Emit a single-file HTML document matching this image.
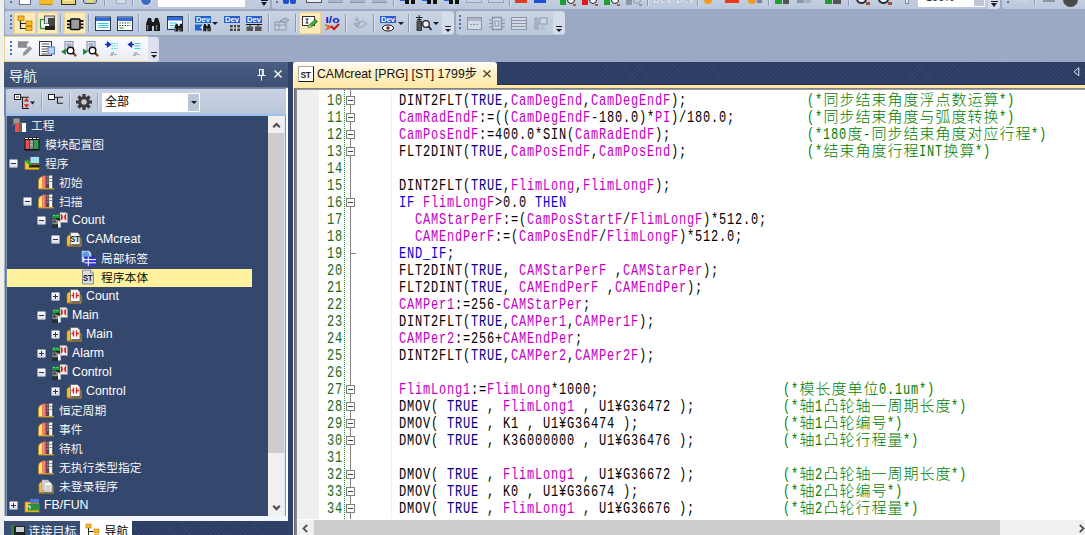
<!DOCTYPE html>
<html lang="zh-CN"><head><meta charset="utf-8"><title>GX Works3</title>
<style>
*{box-sizing:border-box;margin:0;padding:0}
html,body{width:1085px;height:535px;overflow:hidden}
body{position:relative;background:#9CA9C5;font-family:"Liberation Sans","Noto Sans CJK SC",sans-serif;font-size:12px;color:#000}
.a{position:absolute}
svg{position:absolute;overflow:visible}
.tb{position:absolute;background:linear-gradient(#C9D3E4,#BBC7DB);}
.sep{position:absolute;width:1px;background:#8D99B3;box-shadow:1px 0 0 #DCE3EF}
.hl{position:absolute;background:#FDEBB9;border:1px solid #F0D48C}
.grip{position:absolute;width:2px}
.grip i{position:absolute;left:0;width:2px;height:2px;background:#5A6C94}
.tree{position:absolute;left:7px;top:116px;width:261px;height:400px;background:#34476C;color:#fff;font-size:12px;font-weight:350;overflow:hidden}
.row{position:absolute;left:0;height:19px;line-height:19px;white-space:nowrap}
.row span{position:absolute;top:0}
.ex{position:absolute;width:9px;height:9px;background:linear-gradient(#fff,#D8DCE4);border:1px solid #98A0B4;border-radius:1px}
.ex b{position:absolute;left:1px;top:3px;width:5px;height:1px;background:#2B2B6B}
.ex u{position:absolute;left:3px;top:1px;width:1px;height:5px;background:#2B2B6B}
.code{position:absolute;left:0;top:0;font-family:"Liberation Mono","Noto Sans CJK SC",monospace}
.ln{position:absolute;left:0;height:17px;width:800px;white-space:pre}
.s{position:absolute;top:2px;height:17px;line-height:17px;font-size:12px;letter-spacing:.8px;transform:scaleY(1.3333);transform-origin:0 12px;white-space:pre;font-family:"Liberation Mono","Noto Sans CJK SC",monospace}
.m{position:absolute;top:2px;height:17px;line-height:17px;font-size:16px;white-space:pre;color:#008000;font-family:"Liberation Mono","Noto Sans CJK SC",monospace}
.m i{display:inline-block;font-style:normal;font-size:12px;letter-spacing:.8px;line-height:17px;height:17px;vertical-align:top;transform:scaleY(1.3333);transform-origin:0 12px}
.m b{display:inline-block;position:relative;top:-1px;font-weight:300;font-size:15px;width:16px;height:17px;vertical-align:top;line-height:17px;text-align:center}
.k{color:#0000CC}.t{color:#000080}.v{color:#C000C0}
.fb{position:absolute;left:346px;width:9px;height:9px;border:1px solid #808080;background:#fff}
.fb:after{content:"";position:absolute;left:1px;top:3px;width:5px;height:1px;background:#404040}
</style></head>
<body>
<div class="a" style="left:0;top:0;width:4px;height:535px;background:#EFEFEE"></div>
<div class="tb" style="left:5px;top:-6px;width:265px;height:15px;border-radius:3px"></div>
<div class="tb" style="left:272px;top:-6px;width:728px;height:15px;border-radius:3px"></div>
<div class="tb" style="left:1002px;top:-6px;width:90px;height:15px;border-radius:3px"></div>
<div class="a" style="left:988px;top:-6px;width:12px;height:15px;background:#D3DAE8;border-radius:0 0 3px 0"></div>
<div class="a" style="left:10px;top:1px;width:2px;height:2px;background:#5A6C94;"></div>
<div class="a" style="left:19px;top:-2px;width:12px;height:7px;background:#fff;border:1px solid #6A7488"></div>
<div class="a" style="left:39px;top:-2px;width:14px;height:7px;background:#F5B92E;border-radius:0 0 2px 2px;border-bottom:1px solid #B8860B"></div>
<div class="a" style="left:61px;top:-2px;width:15px;height:7px;background:#E8D27A;border:1px solid #333;border-top:0"></div>
<div class="a" style="left:64px;top:-2px;width:9px;height:3px;background:#F5E9A8;"></div>
<div class="a" style="left:83px;top:-2px;width:14px;height:6px;background:#C8C8C0;border:1px solid #555;border-radius:0 0 3px 3px"></div>
<div class="a" style="left:87px;top:-1px;width:6px;height:3px;background:#E2E26A;"></div>
<div class="sep" style="left:104px;top:0;height:6px"></div>
<div class="a" style="left:116px;top:-2px;width:10px;height:6px;background:#D6DCE8;border:1px solid #A8B0C0"></div>
<div class="sep" style="left:132px;top:0;height:6px"></div>
<div class="a" style="left:140px;top:-6px;width:12px;height:12px;background:#3C68C8;border-radius:6px;border:1px solid #E8EEFA"></div>
<div class="a" style="left:158px;top:-4px;width:87px;height:11px;background:#fff;"></div>
<div class="a" style="left:245px;top:-4px;width:11px;height:11px;background:#C2CADB;"></div>
<div class="a" style="left:261px;top:0;width:7px;height:1px;background:#1A1A2A"></div>
<div class="a" style="left:261px;top:2px;width:0;height:0;border:3.5px solid transparent;border-top:4px solid #1A1A2A"></div>
<div class="a" style="left:276px;top:1px;width:2px;height:2px;background:#5A6C94;"></div>
<div class="a" style="left:283px;top:-2px;width:6px;height:6px;background:#1F4FD0;border-radius:0 0 2px 2px"></div>
<div class="a" style="left:290px;top:-2px;width:6px;height:6px;background:#1F4FD0;border-radius:0 0 2px 2px"></div>
<div class="a" style="left:306px;top:-2px;width:16px;height:5px;background:#E8ECF4;border:1px solid #555;border-top:0"></div>
<div class="a" style="left:328px;top:-2px;width:15px;height:5px;background:#AEB6C6;border-bottom:1px solid #8C94A6"></div>
<div class="a" style="left:350px;top:-2px;width:15px;height:5px;background:#AEB6C6;border-bottom:1px solid #8C94A6"></div>
<div class="a" style="left:372px;top:-2px;width:15px;height:5px;background:#AEB6C6;border-bottom:1px solid #8C94A6"></div>
<div class="sep" style="left:393px;top:0;height:6px"></div>
<div class="a" style="left:400px;top:-2px;width:6px;height:3px;background:#1F5FD8;"></div>
<div class="a" style="left:405px;top:-2px;width:4px;height:6px;background:#111;"></div>
<div class="a" style="left:411px;top:-2px;width:4px;height:6px;background:#111;"></div>
<div class="a" style="left:422px;top:-2px;width:6px;height:3px;background:#1F5FD8;"></div>
<div class="a" style="left:427px;top:-2px;width:4px;height:6px;background:#111;"></div>
<div class="a" style="left:433px;top:-2px;width:4px;height:6px;background:#111;"></div>
<div class="a" style="left:444px;top:-2px;width:6px;height:3px;background:#1F5FD8;"></div>
<div class="a" style="left:449px;top:-2px;width:4px;height:6px;background:#111;"></div>
<div class="a" style="left:455px;top:-2px;width:4px;height:6px;background:#111;"></div>
<div class="a" style="left:466px;top:-2px;width:16px;height:5px;background:#C9D0DE;border:1px solid #9AA3B6;border-top:0"></div>
<div class="a" style="left:488px;top:-2px;width:16px;height:5px;background:#C9D0DE;border:1px solid #9AA3B6;border-top:0"></div>
<div class="sep" style="left:509px;top:0;height:6px"></div>
<div class="a" style="left:515px;top:-1px;width:12px;height:4px;background:#E23A1E;"></div>
<div class="a" style="left:534px;top:-1px;width:12px;height:4px;background:#1F4FD0;"></div>
<div class="a" style="left:560px;top:-2px;width:6px;height:7px;background:#1E9E2E;"></div>
<div class="a" style="left:567px;top:-4px;width:8px;height:8px;background:#F4F4F4;border:1.5px solid #222;border-radius:5px"></div>
<div class="a" style="left:573px;top:4px;width:3px;height:2px;background:#B06030;"></div>
<div class="a" style="left:582px;top:-2px;width:6px;height:7px;background:#E01818;"></div>
<div class="a" style="left:589px;top:-4px;width:8px;height:8px;background:#F4F4F4;border:1.5px solid #222;border-radius:5px"></div>
<div class="a" style="left:595px;top:4px;width:3px;height:2px;background:#B06030;"></div>
<div class="a" style="left:604px;top:-2px;width:6px;height:7px;background:#1E9E2E;"></div>
<div class="a" style="left:611px;top:-4px;width:8px;height:8px;background:#F4F4F4;border:1.5px solid #222;border-radius:5px"></div>
<div class="a" style="left:617px;top:4px;width:3px;height:2px;background:#B06030;"></div>
<div class="a" style="left:626px;top:-2px;width:6px;height:7px;background:#8E96A6;"></div>
<div class="a" style="left:633px;top:-4px;width:8px;height:8px;background:#C4CAD6;border:1.5px solid #8E96A6;border-radius:5px"></div>
<div class="a" style="left:639px;top:4px;width:3px;height:2px;background:#8E96A6;"></div>
<div class="sep" style="left:647px;top:0;height:6px"></div>
<div class="a" style="left:653px;top:-6px;font:bold 10px 'Liberation Sans','Noto Sans CJK SC',sans-serif;color:#E6EAF2;text-shadow:0 0 1px #7C869C;letter-spacing:0">Dev</div>
<div class="a" style="left:676px;top:-6px;font:bold 10px 'Liberation Sans','Noto Sans CJK SC',sans-serif;color:#E6EAF2;text-shadow:0 0 1px #7C869C;letter-spacing:0">Dev</div>
<div class="sep" style="left:697px;top:0;height:6px"></div>
<div class="a" style="left:704px;top:-2px;width:8px;height:6px;background:#F59A1E;border-radius:0 0 4px 4px"></div>
<div class="a" style="left:725px;top:-2px;width:14px;height:5px;background:#E83A1A;"></div>
<div class="a" style="left:748px;top:-2px;width:8px;height:6px;background:#F59A1E;border-radius:0 0 4px 4px"></div>
<div class="a" style="left:757px;top:-1px;width:5px;height:4px;background:#7C8496;"></div>
<div class="sep" style="left:768px;top:0;height:6px"></div>
<div class="a" style="left:775px;top:-2px;width:7px;height:6px;background:#1E9E2E;"></div>
<div class="a" style="left:783px;top:-1px;width:6px;height:5px;background:#555;"></div>
<div class="a" style="left:797px;top:-1px;width:7px;height:4px;background:#8E96A6;"></div>
<div class="a" style="left:805px;top:-1px;width:6px;height:4px;background:#A8AEBC;"></div>
<div class="a" style="left:825px;top:-2px;width:7px;height:6px;background:#1E9E2E;"></div>
<div class="a" style="left:833px;top:-1px;width:8px;height:5px;background:#555;"></div>
<div class="sep" style="left:848px;top:0;height:6px"></div>
<div class="a" style="left:856px;top:-6px;width:11px;height:10px;background:#EEF2F8;border:2px solid #2A2A3A;border-radius:6px"></div>
<div class="a" style="left:866px;top:2px;width:4px;height:3px;background:#A05030;"></div>
<div class="a" style="left:878px;top:-6px;width:11px;height:10px;background:#EEF2F8;border:2px solid #2A2A3A;border-radius:6px"></div>
<div class="a" style="left:888px;top:2px;width:4px;height:3px;background:#A05030;"></div>
<div class="a" style="left:905px;top:-1px;width:4px;height:5px;background:#E8ECF4;border:1px solid #7C8496"></div>
<div class="a" style="left:918px;top:-4px;width:67px;height:10.5px;background:#fff;"></div>
<div class="a" style="left:926px;top:-8px;font:11px/11px 'Liberation Sans','Noto Sans CJK SC',sans-serif;color:#222">100%</div>
<div class="a" style="left:974px;top:-4px;width:9.5px;height:9.5px;background:#BEC7D9;"></div>
<div class="a" style="left:991px;top:.5px;width:7px;height:1.500px;background:#1A1A2A"></div>
<div class="a" style="left:991px;top:3px;width:0;height:0;border:3.5px solid transparent;border-top:4px solid #1A1A2A"></div>
<div class="a" style="left:1007px;top:1px;width:2px;height:2px;background:#5A6C94;"></div>
<div class="a" style="left:1018px;top:-2px;width:10px;height:4px;background:#D0D4DC;"></div>
<div class="sep" style="left:1034px;top:0;height:6px"></div>
<div class="a" style="left:1043px;top:-2px;width:12px;height:4px;background:#8E94A0;"></div>
<div class="a" style="left:1063px;top:-8px;width:15px;height:15px;background:#4A4A4A;border-radius:8px"></div>
<div class="tb" style="left:5px;top:11px;width:449px;height:24px;border-radius:3px"></div>
<div class="a" style="left:442px;top:12px;width:12px;height:22px;background:#D6DDEA;border-radius:0 3px 3px 0"></div>
<div class="tb" style="left:456px;top:11px;width:109px;height:24px;border-radius:3px"></div>
<div class="a" style="left:553px;top:12px;width:12px;height:22px;background:#D6DDEA;border-radius:0 3px 3px 0"></div>
<div class="grip" style="left:10px;top:15px"><i style="top:0px"></i><i style="top:4px"></i><i style="top:8px"></i><i style="top:12px"></i></div>
<div class="grip" style="left:459px;top:15px"><i style="top:0px"></i><i style="top:4px"></i><i style="top:8px"></i><i style="top:12px"></i></div>
<div class="hl" style="left:14px;top:12px;width:21.500px;height:22px"></div>
<div class="hl" style="left:36.5px;top:12px;width:21.500px;height:22px"></div>
<div class="hl" style="left:64px;top:12px;width:21.500px;height:22px"></div>
<div class="hl" style="left:299px;top:12px;width:21.500px;height:22px"></div>
<div class="sep" style="left:60px;top:14px;height:18px"></div>
<div class="sep" style="left:88px;top:14px;height:18px"></div>
<div class="sep" style="left:138px;top:14px;height:18px"></div>
<div class="sep" style="left:188px;top:14px;height:18px"></div>
<div class="sep" style="left:268px;top:14px;height:18px"></div>
<div class="sep" style="left:295px;top:14px;height:18px"></div>
<div class="sep" style="left:345px;top:14px;height:18px"></div>
<div class="sep" style="left:373px;top:14px;height:18px"></div>
<div class="sep" style="left:408px;top:14px;height:18px"></div>
<svg style="left:17px;top:15px" width="16" height="16" viewBox="0 0 16 16">
<path d="M3.5 5v8.5h6M3.5 8.5h6" fill="none" stroke="#222" stroke-width="1.2"/>
<rect x="1" y="1" width="6" height="4.5" fill="#F5B92E" stroke="#B87A00" stroke-width=".8"/>
<rect x="9" y="6" width="6" height="4.5" fill="#F5B92E" stroke="#B87A00" stroke-width=".8"/>
<rect x="9" y="11.5" width="6" height="4" fill="#F5B92E" stroke="#B87A00" stroke-width=".8"/></svg>
<svg style="left:40px;top:15px" width="16" height="16" viewBox="0 0 16 16">
<rect x=".5" y="4.500" width="10" height="9" fill="#E8F4E8" stroke="#2E8B3A" stroke-width="1.2"/>
<rect x="4.500" y="1" width="10" height="8" fill="#D8DCE4" stroke="#555" stroke-width="1"/>
<rect x="8" y="3" width="7" height="9" fill="#444"/>
<rect x="5" y="11" width="10" height="4" fill="#222"/>
<rect x="3" y="9" width="6" height="2" fill="#fff"/></svg>
<svg style="left:67px;top:15px" width="16" height="16" viewBox="0 0 16 16">
<rect x="3.500" y="4" width="9.500" height="10.500" rx="1" fill="#9C9C9C" stroke="#111" stroke-width="1.6"/>
<path d="M0 6h3M0 9.300h3M0 12.600h3M13.500 6h3M13.500 9.300h3M13.500 12.600h3" stroke="#111" stroke-width="1.8"/></svg>
<svg style="left:95px;top:15.5px" width="16" height="16" viewBox="0 0 16 16"><rect x=".5" y="1" width="15" height="13.500" fill="#fff" stroke="#2A3A5A" stroke-width="1"/><rect x="1" y="1.500" width="14" height="3.500" fill="#2F6BD8"/><path d="M2.500 7.500h11M2.500 9.500h11M2.500 11.500h11" stroke="#38C8D8" stroke-width="1.100"/></svg>
<svg style="left:117px;top:15.5px" width="16" height="16" viewBox="0 0 16 16"><rect x=".5" y="1" width="15" height="13.500" fill="#fff" stroke="#2A3A5A" stroke-width="1"/><rect x="1" y="1.500" width="14" height="3.500" fill="#2F6BD8"/><path d="M2.500 7h11M2.500 9.500h11" stroke="#222" stroke-width="1.200" stroke-dasharray="1.300 1.300"/><path d="M2.500 12h4" stroke="#3AB83A" stroke-width="1.200"/></svg>
<svg style="left:145px;top:15.5px" width="16" height="16" viewBox="0 0 16 16"><g transform="translate(0 0) scale(1)"><path d="M1 15V8l2-6h3l1 4h2l1-4h3l2 6v7h-6v-5h-2v5z" fill="#1A1A1A"/><path d="M2.500 9v5M11.500 9v5" stroke="#777" stroke-width="1.500"/></g></svg>
<svg style="left:167px;top:15.5px" width="16" height="16" viewBox="0 0 16 16"><rect x=".5" y=".5" width="15" height="13" fill="#fff" stroke="#2A3A5A"/><rect x="1" y="1" width="14" height="3.500" fill="#2F6BD8"/><path d="M2.500 7h7M2.500 9.500h5M2.500 12h4" stroke="#38C8D8" stroke-width="1.100"/><g transform="translate(7 6.5) scale(0.6)"><path d="M1 15V8l2-6h3l1 4h2l1-4h3l2 6v7h-6v-5h-2v5z" fill="#1A1A1A"/><path d="M2.500 9v5M11.500 9v5" stroke="#777" stroke-width="1.500"/></g></svg>
<svg style="left:195px;top:15.5px" width="16" height="16" viewBox="0 0 16 16"><rect x="0" y="0" width="16" height="7" fill="#2060D0"/><text x="8" y="6.300" text-anchor="middle" font-size="7.500" font-weight="bold" fill="#fff" font-family="'Liberation Sans',sans-serif" textLength="14" lengthAdjust="spacingAndGlyphs">Dev</text><rect x="0" y="8.500" width="7" height="6" fill="#2060D0"/><path d="M5 11.500l3-2v4z" fill="#fff"/><g transform="translate(7.5 7) scale(0.55)"><path d="M1 15V8l2-6h3l1 4h2l1-4h3l2 6v7h-6v-5h-2v5z" fill="#1A1A1A"/><path d="M2.500 9v5M11.500 9v5" stroke="#777" stroke-width="1.500"/></g></svg>
<svg style="left:224px;top:15.5px" width="16" height="16" viewBox="0 0 16 16"><rect x="0" y="0" width="16" height="7" fill="#2060D0"/><text x="8" y="6.300" text-anchor="middle" font-size="7.500" font-weight="bold" fill="#fff" font-family="'Liberation Sans',sans-serif" textLength="14" lengthAdjust="spacingAndGlyphs">Dev</text><rect x="6" y="9" width="10" height="6" fill="#444"/><path d="M6 12h10M9.300 9v6M12.700 9v6" stroke="#E8E8E8" stroke-width="1"/></svg>
<svg style="left:246px;top:15.5px" width="16" height="16" viewBox="0 0 16 16"><rect x="0" y="0" width="16" height="7" fill="#2060D0"/><text x="8" y="6.300" text-anchor="middle" font-size="7.500" font-weight="bold" fill="#fff" font-family="'Liberation Sans',sans-serif" textLength="14" lengthAdjust="spacingAndGlyphs">Dev</text><path d="M0 8.500h16M4 8.500v2M12 8.500v2" stroke="#111" stroke-width="1"/><rect x=".5" y="10.500" width="6.500" height="4.500" fill="#555"/><rect x="9" y="10.500" width="6.500" height="4.500" fill="#555"/></svg>
<div class="a" style="left:211.5px;top:21.5px;width:0;height:0;border:3px solid transparent;border-top:3.500px solid #1A1A2A"></div>
<svg style="left:274px;top:16px" width="16" height="16" viewBox="0 0 16 16"><rect x="1" y="6" width="11" height="8" fill="#C8CFDC" stroke="#8F98AC"/><path d="M1 9h11M5 6v8" stroke="#8F98AC"/><path d="M6 5l5-3 4 2-4 3z" fill="#B4BCCC" stroke="#8F98AC"/></svg>
<svg style="left:302px;top:15px" width="16" height="16" viewBox="0 0 16 16"><rect x=".5" y="1.500" width="12" height="9" fill="#fff" stroke="#333"/><path d="M3.500 4h3M5 4v4M3.500 8h3" stroke="#222" stroke-width="1"/><path d="M6 13l1.500-3.500 6-5 2 2.300-6 5z" fill="#3AB03A" stroke="#1E6E1E" stroke-width=".8"/><path d="M6 13l1.500-3.500 1.800 2.300z" fill="#F0C060"/></svg>
<svg style="left:324px;top:15px" width="16" height="16" viewBox="0 0 16 16"><text x="8.500" y="7.500" text-anchor="middle" font-size="9" font-weight="bold" fill="#1020C0" font-family="'Liberation Sans',sans-serif" textLength="14" lengthAdjust="spacingAndGlyphs">I/o</text><path d="M1 10l4 1-2 3 4-2" fill="none" stroke="#F06010" stroke-width="1.600"/><path d="M7 11l3 3 5-5" fill="none" stroke="#D01010" stroke-width="2"/></svg>
<svg style="left:351px;top:15px" width="17" height="16" viewBox="0 0 17 16"><path d="M3 9l8-3 5 3-8 4z" fill="#C4CBD8" stroke="#99A2B5"/><path d="M4 9.500l2 2 3-4" fill="none" stroke="#9AA3B6" stroke-width="1.500"/><path d="M6 1v5M4 4l2 2 2-2" fill="none" stroke="#A8B0C2" stroke-width="1.200"/></svg>
<svg style="left:380px;top:15.5px" width="16" height="16" viewBox="0 0 16 16"><rect x="0" y="0" width="16" height="7" fill="#2060D0"/><text x="8" y="6.300" text-anchor="middle" font-size="7.500" font-weight="bold" fill="#fff" font-family="'Liberation Sans',sans-serif" textLength="14" lengthAdjust="spacingAndGlyphs">Dev</text><ellipse cx="8" cy="12" rx="5.500" ry="3" fill="#fff" stroke="#111" stroke-width="1"/><circle cx="8" cy="12" r="1.800" fill="#7A2A10"/></svg>
<div class="a" style="left:397.5px;top:21.5px;width:0;height:0;border:3px solid transparent;border-top:3.500px solid #1A1A2A"></div>
<svg style="left:415px;top:15px" width="18" height="16" viewBox="0 0 18 16"><rect x="2" y="6" width="4.500" height="9.500" fill="#555" stroke="#222" stroke-width=".8"/><path d="M4.200 0v6M1 2.500h6.500M2 4.500h4.500" stroke="#222" stroke-width="1"/><circle cx="11" cy="9" r="3.300" fill="#F4F8FF" stroke="#222" stroke-width="1.300"/><path d="M13.500 11.500l3 3.500" stroke="#222" stroke-width="1.800"/></svg>
<div class="a" style="left:432.5px;top:21.5px;width:0;height:0;border:3px solid transparent;border-top:3.500px solid #1A1A2A"></div>
<div class="a" style="left:445px;top:25.5px;width:6px;height:1.300px;background:#1A1A2A"></div><div class="a" style="left:445px;top:28.5px;width:0;height:0;border:3px solid transparent;border-top:3.300px solid #1A1A2A"></div>
<svg style="left:467px;top:16px" width="16" height="15" viewBox="0 0 16 15"><rect x=".5" y="1.500" width="14" height="12" fill="#D3D9E5" stroke="#8C95A8"/><rect x="1" y="2" width="13" height="3" fill="#AEB6C6"/><path d="M3 8.500h9" stroke="#8C95A8" stroke-dasharray="2 1"/></svg>
<svg style="left:489px;top:16px" width="16" height="15" viewBox="0 0 16 15"><rect x="3.500" y="1.500" width="9" height="12" fill="#D3D9E5" stroke="#8C95A8" stroke-width="1.500"/><path d="M0 4h3M0 7.500h3M0 11h3M13 4h3M13 7.500h3M13 11h3" stroke="#8C95A8" stroke-width="1.200"/><rect x="6" y="5" width="4" height="5" fill="none" stroke="#8C95A8"/></svg>
<svg style="left:511px;top:16px" width="16" height="15" viewBox="0 0 16 15"><rect x=".5" y="1.500" width="15" height="12" fill="#D3D9E5" stroke="#8C95A8"/><path d="M1 4.500h14M1 7.500h14M1 10.500h14" stroke="#8C95A8"/></svg>
<svg style="left:533px;top:16px" width="16" height="15" viewBox="0 0 16 15"><rect x="1" y="5" width="5" height="9" fill="#A8B0C2"/><rect x="7" y="2" width="7" height="6" fill="#D3D9E5" stroke="#8C95A8"/><path d="M3 1v4M1 3h5" stroke="#8C95A8"/><rect x="8" y="9" width="4" height="5" fill="#B8C0D0"/></svg>
<div class="a" style="left:556px;top:25.5px;width:6px;height:1.300px;background:#1A1A2A"></div><div class="a" style="left:556px;top:28.5px;width:0;height:0;border:3px solid transparent;border-top:3.300px solid #1A1A2A"></div>
<div class="a" style="left:4px;top:36px;width:144px;height:26px;background:linear-gradient(#FAFBFE,#E9EDF7);border:1px solid #EFD68A;border-right:0;border-radius:2px 0 0 0"></div>
<div class="a" style="left:147.5px;top:36.5px;width:11.5px;height:25px;background:#DBE1EE;border-radius:0 3px 3px 0"></div>
<div class="grip" style="left:10px;top:41px"><i style="top:0px"></i><i style="top:4px"></i><i style="top:8px"></i><i style="top:12px"></i></div>
<svg style="left:18px;top:41px" width="16" height="16" viewBox="0 0 16 16"><path d="M0 .3H11L8.500 4 10 6.800H0z" fill="#8C8C8C"/><path d="M11.500 5L14.200 7.700 7.800 14 4.800 14.800 5.200 11.800z" fill="#979797"/></svg>
<svg style="left:39px;top:41px" width="17" height="16" viewBox="0 0 17 16"><rect x=".5" y=".5" width="12" height="14" fill="#fff" stroke="#333"/><path d="M2.500 3h8M2.500 5.500h8M2.500 8h8M2.500 10.500h6M2.500 13h6" stroke="#555" stroke-width="1"/><rect x="9" y="6" width="6.500" height="7" fill="#BFD0F0" stroke="#5A7AC0"/></svg>
<svg style="left:61px;top:41px" width="16" height="16" viewBox="0 0 16 16"><rect x="4" y=".5" width="8" height="9" fill="#E8ECF6" stroke="#7C88A8"/><path d="M5.500 3h5M5.500 5h5" stroke="#6C7CA8"/><circle cx="9.500" cy="9.500" r="3.300" fill="#fff" stroke="#111" stroke-width="1.400"/><path d="M12 12l3 3" stroke="#111" stroke-width="2"/><path d="M13 13l2 2" stroke="#B05020" stroke-width="1.400"/><path d="M5 7.500v6.500l-5-3.200z" fill="#1E8E2E"/></svg>
<svg style="left:83px;top:41px" width="16" height="16" viewBox="0 0 16 16"><rect x="4" y=".5" width="8" height="9" fill="#E8ECF6" stroke="#7C88A8"/><path d="M5.500 3h5M5.500 5h5" stroke="#6C7CA8"/><circle cx="9.500" cy="9.500" r="3.300" fill="#fff" stroke="#111" stroke-width="1.400"/><path d="M12 12l3 3" stroke="#111" stroke-width="2"/><path d="M13 13l2 2" stroke="#B05020" stroke-width="1.400"/><path d="M0 7.500v6.500l5-3.200z" fill="#1E8E2E"/></svg>
<svg style="left:105px;top:41px" width="16" height="16" viewBox="0 0 16 16"><path d="M6.500 2.500h6M6.500 5h6M6.500 7.500h6" stroke="#48D0D8" stroke-width="1.200" stroke-dasharray="1.500 1"/><text x="5.500" y="15" font-size="5.500" font-style="italic" fill="#222" font-family="'Liberation Sans',sans-serif">//−</text><path d="M0 3.500h3.500M2.500 1.200l3 2.300-3 2.300z" fill="#1030C8" stroke="#1030C8" stroke-width="1.300"/></svg>
<svg style="left:128px;top:41px" width="16" height="16" viewBox="0 0 16 16"><path d="M6.500 2.500h6M6.500 5h6M6.500 7.500h6" stroke="#48D0D8" stroke-width="1.200" stroke-dasharray="6 0"/><text x="5.500" y="15" font-size="5.500" font-style="italic" fill="#222" font-family="'Liberation Sans',sans-serif">//−</text><path d="M6 3.500h-3.500M3.500 1.200l-3 2.300 3 2.300z" fill="#1030C8" stroke="#1030C8" stroke-width="1.300"/></svg>
<div class="a" style="left:150.5px;top:52px;width:6px;height:1.300px;background:#1A1A2A"></div><div class="a" style="left:150.5px;top:55px;width:0;height:0;border:3px solid transparent;border-top:3.300px solid #1A1A2A"></div>
<div class="a" style="left:4px;top:62px;width:284px;height:473px;background:#3A4D73"></div>
<div class="a" style="left:4px;top:62px;width:284px;height:26px;background:linear-gradient(#4A5D83,#3B4E74)"></div>
<div class="a" style="left:9px;top:63px;height:26px;line-height:27px;font-size:14px;color:#fff;font-weight:350">导航</div>
<svg style="left:257px;top:69px" width="9" height="12" viewBox="0 0 9 12"><path d="M2 .5h5M2.500 .5v6M6.300 .5v6M5.300 .5v6M.5 6.500h8M4.500 6.500v5" fill="none" stroke="#fff" stroke-width="1"/></svg>
<svg style="left:274px;top:70px" width="8" height="8" viewBox="0 0 8 8"><path d="M.5 .5l7 7M7.500 .5l-7 7" stroke="#fff" stroke-width="1.400"/></svg>
<div class="a" style="left:4px;top:87px;width:284px;height:1px;background:#6F7788"></div>
<div class="a" style="left:4px;top:88px;width:282px;height:28px;background:#7088B5"></div><div class="a" style="left:6px;top:88.500px;width:280px;height:26px;background:linear-gradient(#C9D2E2,#B9C5D9);border-radius:2px 0 0 0"></div>
<div class="a" style="left:6px;top:114px;width:280px;height:1.500px;background:#9CC0F2"></div>
<svg style="left:14px;top:94px" width="22" height="16" viewBox="0 0 22 16"><rect x=".5" y=".5" width="6" height="5" fill="#fff" stroke="#222"/><path d="M2 3h3" stroke="#222"/><path d="M7 3.200h8M8.500 3.200v11.300h6.500" fill="none" stroke="#222" stroke-width="1.100"/><path d="M12.500 3.800l2.600 3.700h-5.200zM12.500 14l2.600-3.700h-5.200z" fill="#E02010"/><path d="M16 7.500h5l-2.500 3z" fill="#1A1A2A"/></svg>
<div class="sep" style="left:41px;top:93px;height:17px;background:#98A3BA"></div>
<svg style="left:48px;top:94px" width="16" height="10" viewBox="0 0 16 10"><rect x=".5" y=".5" width="6" height="5" fill="#fff" stroke="#222"/><path d="M7 3.200h8M9.500 3.200v6h5.500" fill="none" stroke="#222" stroke-width="1.100"/></svg>
<div class="sep" style="left:69px;top:93px;height:17px;background:#98A3BA"></div>
<svg style="left:76px;top:94px" width="16" height="16" viewBox="0 0 16 16"><g transform="translate(8 8)"><circle r="4.300" fill="none" stroke="#3A3A3A" stroke-width="3"/><rect x="-1.600" y="-8" width="3.200" height="4" fill="#3A3A3A" transform="rotate(0)"/><rect x="-1.600" y="-8" width="3.200" height="4" fill="#3A3A3A" transform="rotate(45)"/><rect x="-1.600" y="-8" width="3.200" height="4" fill="#3A3A3A" transform="rotate(90)"/><rect x="-1.600" y="-8" width="3.200" height="4" fill="#3A3A3A" transform="rotate(135)"/><rect x="-1.600" y="-8" width="3.200" height="4" fill="#3A3A3A" transform="rotate(180)"/><rect x="-1.600" y="-8" width="3.200" height="4" fill="#3A3A3A" transform="rotate(225)"/><rect x="-1.600" y="-8" width="3.200" height="4" fill="#3A3A3A" transform="rotate(270)"/><rect x="-1.600" y="-8" width="3.200" height="4" fill="#3A3A3A" transform="rotate(315)"/></g></svg>
<div class="sep" style="left:97px;top:93px;height:17px;background:#98A3BA"></div>
<div class="a" style="left:102px;top:92.500px;width:98px;height:19px;background:#fff"></div>
<div class="a" style="left:188px;top:93.500px;width:11px;height:17px;background:#BCC5D6"></div>
<div class="a" style="left:105px;top:92px;height:20px;line-height:20px;font-size:12px">全部</div>
<div class="a" style="left:190.5px;top:101px;width:0;height:0;border:3px solid transparent;border-top:3.500px solid #1A1A2A"></div>
<div class="a" style="left:4px;top:116px;width:1px;height:400px;background:#B4B5BC"></div><div class="a" style="left:5px;top:116px;width:1px;height:400px;background:#687286"></div><div class="a" style="left:6px;top:116px;width:1px;height:400px;background:#7893B8"></div>
<div class="tree"><div class="row" style="top:0px;width:261px"><svg style="left:5px;top:1px" width="16" height="16" viewBox="0 0 16 16"><rect x="1" y="1" width="7" height="6" fill="#999" stroke="#444" stroke-width=".8"/><rect x="3" y="6" width="4" height="9" fill="#E85050"/><rect x="7" y="5" width="3" height="10" fill="#666"/><rect x="10" y="6" width="4" height="9" fill="#fff"/><path d="M0 8l2-1" stroke="#888"/></svg><span style="left:24px;top:1px;font-size:11.800px">工程</span></div><div class="row" style="top:19px;width:261px"><svg style="left:17px;top:1px" width="16" height="16" viewBox="0 0 16 16"><rect x=".5" y="1.500" width="15" height="13" fill="#111"/><rect x="1.500" y="4" width="4" height="9" fill="#E85050"/><rect x="6" y="4" width="3.500" height="9" fill="#888"/><rect x="10" y="4" width="4.500" height="9" fill="#2E9E4E"/><path d="M1 2.500h14" stroke="#fff" stroke-width="1.200" stroke-dasharray="3 1"/><path d="M6.500 6h2M6.500 9h2" stroke="#eee" stroke-width=".8"/></svg><span style="left:38px;top:1px;font-size:11.800px">模块配置图</span></div><div class="row" style="top:38px;width:261px"><div class="ex" style="left:2px;top:5px"><b></b></div><svg style="left:17px;top:1px" width="16" height="16" viewBox="0 0 16 16"><path d="M1 6h5l1 1.500h8v7h-14z" fill="#F5C030" stroke="#B8860B" stroke-width=".7"/><rect x="6" y="1.500" width="9.500" height="7" fill="#9EE0F0" stroke="#445" stroke-width=".8"/><rect x="5" y="9.500" width="10.500" height="3" fill="#222"/><path d="M2 5l5 5" stroke="#2E9E3E" stroke-width="2.500"/></svg><span style="left:38px;top:1px;font-size:11.800px">程序</span></div><div class="row" style="top:57px;width:261px"><svg style="left:31px;top:1px" width="16" height="16" viewBox="0 0 16 16"><path d="M.5 7q0-3 2.500-4l2-.5v12h-4.500z" fill="#FFE27A" stroke="#C08A18" stroke-width=".8"/><rect x="4.500" y="1.500" width="4" height="13" fill="#EE4B4B"/><rect x="5.300" y="2" width="1.200" height="12" fill="#F9A0A0"/><rect x="8.500" y=".5" width="2.700" height="14" fill="#4A4A4A"/><path d="M9 3h1.700M9 6h1.700M9 9h1.700" stroke="#C8C8C8" stroke-width=".8"/><rect x="11.200" y="1.500" width="3.300" height="13" fill="#F6F6F6"/><path d="M11.800 4.500h2M11.800 7.500h2" stroke="#555" stroke-width=".8"/><rect x="14.500" y="2.500" width="1.200" height="12" fill="#3A3A3A"/><path d="M.8 14.700h15" stroke="#D8A028" stroke-width="1.400"/></svg><span style="left:52px;top:1px;font-size:11.800px">初始</span></div><div class="row" style="top:76px;width:261px"><div class="ex" style="left:16px;top:5px"><b></b></div><svg style="left:31px;top:1px" width="16" height="16" viewBox="0 0 16 16"><path d="M.5 7q0-3 2.500-4l2-.5v12h-4.500z" fill="#FFE27A" stroke="#C08A18" stroke-width=".8"/><rect x="4.500" y="1.500" width="4" height="13" fill="#EE4B4B"/><rect x="5.300" y="2" width="1.200" height="12" fill="#F9A0A0"/><rect x="8.500" y=".5" width="2.700" height="14" fill="#4A4A4A"/><path d="M9 3h1.700M9 6h1.700M9 9h1.700" stroke="#C8C8C8" stroke-width=".8"/><rect x="11.200" y="1.500" width="3.300" height="13" fill="#F6F6F6"/><path d="M11.800 4.500h2M11.800 7.500h2" stroke="#555" stroke-width=".8"/><rect x="14.500" y="2.500" width="1.200" height="12" fill="#3A3A3A"/><path d="M.8 14.700h15" stroke="#D8A028" stroke-width="1.400"/></svg><span style="left:52px;top:1px;font-size:11.800px">扫描</span></div><div class="row" style="top:95px;width:261px"><div class="ex" style="left:30px;top:5px"><b></b></div><svg style="left:45px;top:1px" width="16" height="16" viewBox="0 0 16 16"><rect x=".5" y="2.500" width="6.500" height="3.500" fill="#18A038"/><path d="M1 3.500h2M4.500 3.500h1.500" stroke="#8EE09A" stroke-width=".8"/><rect x="4" y="6" width="4" height="2.500" fill="#111"/><rect x=".5" y="7.500" width="6" height="5" fill="#8A9082"/><rect x="1.500" y="8.500" width="2" height="2" fill="#222"/><path d="M0 13h6M0 15h6" stroke="#151515" stroke-width="1.100"/><rect x="6" y="9" width="2.700" height="6.500" fill="#F4F4F4"/><path d="M8 .5h6l1.500 1.500v8.500h-7.500z" fill="#EDEDED" stroke="#9A9A9A" stroke-width=".6"/><path d="M9.300 2.500q1.600 2.700 0 5.400M13.700 2.500q-1.600 2.700 0 5.400" fill="none" stroke="#E01818" stroke-width="1.700"/></svg><span style="left:65px;top:0px;font-size:12.300px">Count</span></div><div class="row" style="top:114px;width:261px"><div class="ex" style="left:44px;top:5px"><b></b></div><svg style="left:59px;top:1px" width="16" height="16" viewBox="0 0 16 16"><path d="M1 6l2-2h3v10.500h-5z" fill="#F5C030" stroke="#B8860B" stroke-width=".6"/><path d="M1 15h14v-7l-1.500-1" fill="none" stroke="#C89018" stroke-width="1.200"/><path d="M4.500 1.500h7l2.500 2.500v9.500h-9.500z" fill="#F4F4F4" stroke="#666" stroke-width=".8"/><text x="9" y="11" text-anchor="middle" font-size="8.500" font-weight="bold" fill="#111" font-family="'Liberation Sans',sans-serif" textLength="9.500" lengthAdjust="spacingAndGlyphs">ST</text></svg><span style="left:79px;top:0px;font-size:12.300px">CAMcreat</span></div><div class="row" style="top:133px;width:261px"><svg style="left:73px;top:1px" width="16" height="16" viewBox="0 0 16 16"><path d="M2 1h7l2 2v9h-9z" fill="#D8E8FA" stroke="#8AA8D8" stroke-width=".8"/><circle cx="6" cy="5" r="3.500" fill="#5A9AE8"/><rect x="4.500" y="6.500" width="11.500" height="9.500" fill="#3434CC"/><path d="M4.500 9.600h11.500M4.500 12.800h11.500M8.300 6.500v9.500" stroke="#fff" stroke-width="1"/></svg><span style="left:94px;top:1px;font-size:11.800px">局部标签</span></div><div class="row" style="top:152px;width:245px;height:18px;background:#FFF29E;color:#000;top:153px"><svg style="left:73px;top:0px" width="16" height="16" viewBox="0 0 16 16"><path d="M2.500 1h8l3 3v11h-11z" fill="#DCDCDC" stroke="#777" stroke-width=".8"/><path d="M10.500 1v3h3" fill="#ccc" stroke="#777" stroke-width=".6"/><text x="7.800" y="12" text-anchor="middle" font-size="8.500" font-weight="bold" fill="#111" font-family="'Liberation Sans',sans-serif" textLength="9.500" lengthAdjust="spacingAndGlyphs">ST</text></svg><span style="left:94px;top:0px;font-size:11.800px">程序本体</span></div><div class="row" style="top:171px;width:261px"><div class="ex" style="left:44px;top:5px"><b></b><u></u></div><svg style="left:59px;top:1px" width="16" height="16" viewBox="0 0 16 16"><path d="M1 6l2-2h3v10.500h-5z" fill="#F5C030" stroke="#B8860B" stroke-width=".6"/><path d="M1 15h14v-7l-1.500-1" fill="none" stroke="#C89018" stroke-width="1.200"/><path d="M4.500 1.500h7l2.500 2.500v9.500h-9.500z" fill="#F8F8F8" stroke="#666" stroke-width=".8"/><path d="M7.500 4.500v6M10.500 4.500v6M5.500 7.500h2M10.500 7.500h2.500" stroke="#E02020" stroke-width="1.300"/></svg><span style="left:79px;top:0px;font-size:12.300px">Count</span></div><div class="row" style="top:190px;width:261px"><div class="ex" style="left:30px;top:5px"><b></b></div><svg style="left:45px;top:1px" width="16" height="16" viewBox="0 0 16 16"><rect x=".5" y="2.500" width="6.500" height="3.500" fill="#18A038"/><path d="M1 3.500h2M4.500 3.500h1.500" stroke="#8EE09A" stroke-width=".8"/><rect x="4" y="6" width="4" height="2.500" fill="#111"/><rect x=".5" y="7.500" width="6" height="5" fill="#8A9082"/><rect x="1.500" y="8.500" width="2" height="2" fill="#222"/><path d="M0 13h6M0 15h6" stroke="#151515" stroke-width="1.100"/><rect x="6" y="9" width="2.700" height="6.500" fill="#F4F4F4"/><path d="M8 .5h6l1.500 1.500v8.500h-7.500z" fill="#EDEDED" stroke="#9A9A9A" stroke-width=".6"/><path d="M9.300 2.500q1.600 2.700 0 5.400M13.700 2.500q-1.600 2.700 0 5.400" fill="none" stroke="#E01818" stroke-width="1.700"/></svg><span style="left:65px;top:0px;font-size:12.300px">Main</span></div><div class="row" style="top:209px;width:261px"><div class="ex" style="left:44px;top:5px"><b></b><u></u></div><svg style="left:59px;top:1px" width="16" height="16" viewBox="0 0 16 16"><path d="M1 6l2-2h3v10.500h-5z" fill="#F5C030" stroke="#B8860B" stroke-width=".6"/><path d="M1 15h14v-7l-1.500-1" fill="none" stroke="#C89018" stroke-width="1.200"/><path d="M4.500 1.500h7l2.500 2.500v9.500h-9.500z" fill="#F8F8F8" stroke="#666" stroke-width=".8"/><path d="M7.500 4.500v6M10.500 4.500v6M5.500 7.500h2M10.500 7.500h2.500" stroke="#E02020" stroke-width="1.300"/></svg><span style="left:79px;top:0px;font-size:12.300px">Main</span></div><div class="row" style="top:228px;width:261px"><div class="ex" style="left:30px;top:5px"><b></b><u></u></div><svg style="left:45px;top:1px" width="16" height="16" viewBox="0 0 16 16"><rect x=".5" y="2.500" width="6.500" height="3.500" fill="#18A038"/><path d="M1 3.500h2M4.500 3.500h1.500" stroke="#8EE09A" stroke-width=".8"/><rect x="4" y="6" width="4" height="2.500" fill="#111"/><rect x=".5" y="7.500" width="6" height="5" fill="#8A9082"/><rect x="1.500" y="8.500" width="2" height="2" fill="#222"/><path d="M0 13h6M0 15h6" stroke="#151515" stroke-width="1.100"/><rect x="6" y="9" width="2.700" height="6.500" fill="#F4F4F4"/><path d="M8 .5h6l1.500 1.500v8.500h-7.500z" fill="#EDEDED" stroke="#9A9A9A" stroke-width=".6"/><path d="M9.300 2.500q1.600 2.700 0 5.400M13.700 2.500q-1.600 2.700 0 5.400" fill="none" stroke="#E01818" stroke-width="1.700"/></svg><span style="left:65px;top:0px;font-size:12.300px">Alarm</span></div><div class="row" style="top:247px;width:261px"><div class="ex" style="left:30px;top:5px"><b></b></div><svg style="left:45px;top:1px" width="16" height="16" viewBox="0 0 16 16"><rect x=".5" y="2.500" width="6.500" height="3.500" fill="#18A038"/><path d="M1 3.500h2M4.500 3.500h1.500" stroke="#8EE09A" stroke-width=".8"/><rect x="4" y="6" width="4" height="2.500" fill="#111"/><rect x=".5" y="7.500" width="6" height="5" fill="#8A9082"/><rect x="1.500" y="8.500" width="2" height="2" fill="#222"/><path d="M0 13h6M0 15h6" stroke="#151515" stroke-width="1.100"/><rect x="6" y="9" width="2.700" height="6.500" fill="#F4F4F4"/><path d="M8 .5h6l1.500 1.500v8.500h-7.500z" fill="#EDEDED" stroke="#9A9A9A" stroke-width=".6"/><path d="M9.300 2.500q1.600 2.700 0 5.400M13.700 2.500q-1.600 2.700 0 5.400" fill="none" stroke="#E01818" stroke-width="1.700"/></svg><span style="left:65px;top:0px;font-size:12.300px">Control</span></div><div class="row" style="top:266px;width:261px"><div class="ex" style="left:44px;top:5px"><b></b><u></u></div><svg style="left:59px;top:1px" width="16" height="16" viewBox="0 0 16 16"><path d="M1 6l2-2h3v10.500h-5z" fill="#F5C030" stroke="#B8860B" stroke-width=".6"/><path d="M1 15h14v-7l-1.500-1" fill="none" stroke="#C89018" stroke-width="1.200"/><path d="M4.500 1.500h7l2.500 2.500v9.500h-9.500z" fill="#F8F8F8" stroke="#666" stroke-width=".8"/><path d="M7.500 4.500v6M10.500 4.500v6M5.500 7.500h2M10.500 7.500h2.500" stroke="#E02020" stroke-width="1.300"/></svg><span style="left:79px;top:0px;font-size:12.300px">Control</span></div><div class="row" style="top:285px;width:261px"><svg style="left:31px;top:1px" width="16" height="16" viewBox="0 0 16 16"><path d="M.5 7q0-3 2.500-4l2-.5v12h-4.500z" fill="#FFE27A" stroke="#C08A18" stroke-width=".8"/><rect x="4.500" y="1.500" width="4" height="13" fill="#EE4B4B"/><rect x="5.300" y="2" width="1.200" height="12" fill="#F9A0A0"/><rect x="8.500" y=".5" width="2.700" height="14" fill="#4A4A4A"/><path d="M9 3h1.700M9 6h1.700M9 9h1.700" stroke="#C8C8C8" stroke-width=".8"/><rect x="11.200" y="1.500" width="3.300" height="13" fill="#F6F6F6"/><path d="M11.800 4.500h2M11.800 7.500h2" stroke="#555" stroke-width=".8"/><rect x="14.500" y="2.500" width="1.200" height="12" fill="#3A3A3A"/><path d="M.8 14.700h15" stroke="#D8A028" stroke-width="1.400"/></svg><span style="left:52px;top:1px;font-size:11.800px">恒定周期</span></div><div class="row" style="top:304px;width:261px"><svg style="left:31px;top:1px" width="16" height="16" viewBox="0 0 16 16"><path d="M.5 7q0-3 2.500-4l2-.5v12h-4.500z" fill="#FFE27A" stroke="#C08A18" stroke-width=".8"/><rect x="4.500" y="1.500" width="4" height="13" fill="#EE4B4B"/><rect x="5.300" y="2" width="1.200" height="12" fill="#F9A0A0"/><rect x="8.500" y=".5" width="2.700" height="14" fill="#4A4A4A"/><path d="M9 3h1.700M9 6h1.700M9 9h1.700" stroke="#C8C8C8" stroke-width=".8"/><rect x="11.200" y="1.500" width="3.300" height="13" fill="#F6F6F6"/><path d="M11.800 4.500h2M11.800 7.500h2" stroke="#555" stroke-width=".8"/><rect x="14.500" y="2.500" width="1.200" height="12" fill="#3A3A3A"/><path d="M.8 14.700h15" stroke="#D8A028" stroke-width="1.400"/></svg><span style="left:52px;top:1px;font-size:11.800px">事件</span></div><div class="row" style="top:323px;width:261px"><svg style="left:31px;top:1px" width="16" height="16" viewBox="0 0 16 16"><path d="M.5 7q0-3 2.500-4l2-.5v12h-4.500z" fill="#FFE27A" stroke="#C08A18" stroke-width=".8"/><rect x="4.500" y="1.500" width="4" height="13" fill="#EE4B4B"/><rect x="5.300" y="2" width="1.200" height="12" fill="#F9A0A0"/><rect x="8.500" y=".5" width="2.700" height="14" fill="#4A4A4A"/><path d="M9 3h1.700M9 6h1.700M9 9h1.700" stroke="#C8C8C8" stroke-width=".8"/><rect x="11.200" y="1.500" width="3.300" height="13" fill="#F6F6F6"/><path d="M11.800 4.500h2M11.800 7.500h2" stroke="#555" stroke-width=".8"/><rect x="14.500" y="2.500" width="1.200" height="12" fill="#3A3A3A"/><path d="M.8 14.700h15" stroke="#D8A028" stroke-width="1.400"/></svg><span style="left:52px;top:1px;font-size:11.800px">待机</span></div><div class="row" style="top:342px;width:261px"><svg style="left:31px;top:1px" width="16" height="16" viewBox="0 0 16 16"><path d="M.5 7q0-3 2.500-4l2-.5v12h-4.500z" fill="#FFE27A" stroke="#C08A18" stroke-width=".8"/><rect x="4.500" y="1.500" width="4" height="13" fill="#EE4B4B"/><rect x="5.300" y="2" width="1.200" height="12" fill="#F9A0A0"/><rect x="8.500" y=".5" width="2.700" height="14" fill="#4A4A4A"/><path d="M9 3h1.700M9 6h1.700M9 9h1.700" stroke="#C8C8C8" stroke-width=".8"/><rect x="11.200" y="1.500" width="3.300" height="13" fill="#F6F6F6"/><path d="M11.800 4.500h2M11.800 7.500h2" stroke="#555" stroke-width=".8"/><rect x="14.500" y="2.500" width="1.200" height="12" fill="#3A3A3A"/><path d="M.8 14.700h15" stroke="#D8A028" stroke-width="1.400"/></svg><span style="left:52px;top:1px;font-size:11.800px">无执行类型指定</span></div><div class="row" style="top:361px;width:261px"><svg style="left:31px;top:1px" width="16" height="16" viewBox="0 0 16 16"><path d="M1 6l2-2h3v10.500h-5z" fill="#F5C030" stroke="#B8860B" stroke-width=".6"/><path d="M1 15h14v-7l-1.500-1" fill="none" stroke="#C89018" stroke-width="1.200"/><path d="M4 2h6l2 2v9h-8z" fill="#E8E8E8" stroke="#888" stroke-width=".7"/><path d="M6 4h6l2 2v8h-8z" fill="#F8F8F8" stroke="#888" stroke-width=".7"/><path d="M7.500 8h5M7.500 10h5M7.500 12h5" stroke="#999" stroke-width=".8"/></svg><span style="left:52px;top:1px;font-size:11.800px">未登录程序</span></div><div class="row" style="top:380px;width:261px"><div class="ex" style="left:2px;top:5px"><b></b><u></u></div><svg style="left:17px;top:1px" width="16" height="16" viewBox="0 0 16 16"><path d="M1 5h5l1 1.500h8v8.500h-14z" fill="#F5C030" stroke="#B8860B" stroke-width=".7"/><rect x="4" y="7" width="11" height="6.500" fill="#2E8E3E"/><rect x="6" y="2" width="9" height="4" fill="#4A78D8"/><path d="M3 9h3v3" stroke="#fff" fill="none"/></svg><span style="left:37px;top:0px;font-size:12.300px">FB/FUN</span></div></div>
<div class="a" style="left:268px;top:116px;width:16px;height:400px;background:#F0F0F0"></div>
<div class="a" style="left:268px;top:133px;width:15.500px;height:320px;background:#CDCDCD"></div>
<svg style="left:272px;top:122px" width="9" height="6" viewBox="0 0 9 6"><path d="M1.200 5.300l3.300-3.300 3.300 3.300" fill="none" stroke="#505050" stroke-width="2.200"/></svg>
<svg style="left:272px;top:505px" width="9" height="6" viewBox="0 0 9 6"><path d="M1.200 .8l3.300 3.300 3.300-3.300" fill="none" stroke="#505050" stroke-width="2.200"/></svg>
<div class="a" style="left:284px;top:116px;width:1px;height:400px;background:#DCEAFA"></div><div class="a" style="left:285px;top:116px;width:1px;height:400px;background:#8095B4"></div><div class="a" style="left:286px;top:88px;width:2px;height:433px;background:#fff"></div>
<div class="a" style="left:4px;top:516px;width:284px;height:5px;background:#F2F6FC"></div>
<div class="a" style="left:4px;top:521px;width:284px;height:14px;background:#2D3F66;background-image:repeating-linear-gradient(45deg,rgba(255,255,255,.035) 0 1px,transparent 1px 3px),repeating-linear-gradient(-45deg,rgba(0,0,0,.06) 0 1px,transparent 1px 3px)"></div>
<div class="a" style="left:4px;top:521px;width:76px;height:14px;background:#3A4D73"></div>
<div class="a" style="left:80px;top:520px;width:52px;height:15px;background:#fff"></div>
<svg style="left:10px;top:524px" width="16" height="12" viewBox="0 0 16 12"><rect x="1" y="1" width="4" height="11" fill="#2E7E3E"/><rect x="4" y="2" width="11" height="10" fill="#222"/><rect x="6" y="3" width="8" height="5" fill="#C8D0D8"/></svg>
<div class="a" style="left:28.500px;top:523px;line-height:19px;font-size:12px;font-weight:350;color:#fff;white-space:nowrap">连接目标</div>
<svg style="left:85px;top:523px" width="16" height="13" viewBox="0 0 16 13"><rect x="1" y="1" width="5" height="4" fill="#F5B92E" stroke="#B87A00" stroke-width=".6"/><rect x="9" y="6" width="5" height="4" fill="#F5B92E" stroke="#B87A00" stroke-width=".6"/><path d="M3.500 5v8M3.500 8.500h5" fill="none" stroke="#222"/><rect x="9" y="11" width="5" height="3" fill="#F5B92E"/></svg>
<div class="a" style="left:104.500px;top:523px;line-height:19px;font-size:12px;color:#000;white-space:nowrap">导航</div>
<div class="a" style="left:288px;top:62px;width:5px;height:473px;background:linear-gradient(90deg,#2F426A 85%,#3A3C44)"></div>
<div class="a" style="left:293px;top:62px;width:792px;height:23px;background:#2C3E65;background-image:repeating-linear-gradient(45deg,rgba(255,255,255,.035) 0 1px,transparent 1px 3px),repeating-linear-gradient(-45deg,rgba(0,0,0,.06) 0 1px,transparent 1px 3px);border-bottom:1px solid #24324F"></div>
<div class="a" style="left:293px;top:85px;width:792px;height:3px;background:#FFE8A6"></div>
<div class="a" style="left:293px;top:62px;width:204px;height:26px;background:linear-gradient(#FFFDF6,#FFF0C4 45%,#FFE8A6);border-radius:2px 3px 0 0;border-left:1px solid #FFFBEA"></div>
<div class="a" style="left:298px;top:66px;width:16px;height:16px;background:#fff;border:1px solid #A8A8A8;border-right:1.500px solid #1A1A1A;border-bottom:1.500px solid #1A1A1A"></div>
<div class="a" style="left:299px;top:69px;width:13px;height:12px;line-height:12px;text-align:center;font-size:8.500px;font-weight:bold;letter-spacing:-.5px;color:#222">ST</div>
<div class="a" id="tabtxt" style="left:317px;top:62px;height:25px;line-height:25px;font-size:12.250px;white-space:nowrap;color:#111">CAMcreat [PRG] [ST] 1799步</div>
<svg style="left:483px;top:70px" width="8" height="8" viewBox="0 0 8 8"><path d="M.5 .5l7 6.500M7.500 .5l-7 6.500" stroke="#4A3E1E" stroke-width="1.300"/></svg>
<svg style="left:1073px;top:67px" width="8" height="10" viewBox="0 0 8 10"><path d="M5.800 .8v8l-4.800-4z" fill="none" stroke="#DDE4F2" stroke-width="1"/></svg>
<div class="a" style="left:293px;top:88px;width:792px;height:447px;background:#fff"></div>
<div class="a" style="left:294px;top:88px;width:791px;height:2px;background:linear-gradient(#767676,#A8A8A8)"></div>
<div class="a" style="left:293px;top:88px;width:1px;height:447px;background:#F6EDD4"></div><div class="a" style="left:294px;top:88px;width:2.500px;height:447px;background:linear-gradient(90deg,#6C6C6C,#8E8E8E)"></div>
<div class="a" style="left:296.500px;top:90px;width:22.500px;height:429px;background:#EFEFEF"></div>
<div class="a" style="left:391px;top:90px;width:1px;height:429px;background:#F1F1F1"></div>
<div class="a" style="left:344px;top:90px;width:1px;height:429px;background:repeating-linear-gradient(#2E8B2E 0 1px,transparent 1px 2px)"></div>
<div class="a" style="left:350px;top:90px;width:1px;height:429px;background:#808080"></div>
<div class="code"><div class="ln" style="top:92px"><span class="s" style="left:327px;color:#1B6B1B">10</span><span class="s" style="left:399px">DINT2FLT(<span class="t">TRUE</span>,<span class="v">CamDegEnd</span>,<span class="v">CamDegEndF</span>);</span><span class="m" style="left:807px"><i style="width:16px">(*</i><b>同</b><b>步</b><b>结</b><b>束</b><b>角</b><b>度</b><b>浮</b><b>点</b><b>数</b><b>运</b><b>算</b><i style="width:16px">*)</i></span></div><div class="fb" style="top:96px"></div><div class="ln" style="top:109px"><span class="s" style="left:327px;color:#1B6B1B">11</span><span class="s" style="left:399px"><span class="v">CamRadEndF</span>:=((<span class="v">CamDegEndF</span>-180.0)*<span class="v">PI</span>)/180.0;</span><span class="m" style="left:807px"><i style="width:16px">(*</i><b>同</b><b>步</b><b>结</b><b>束</b><b>角</b><b>度</b><b>与</b><b>弧</b><b>度</b><b>转</b><b>换</b><i style="width:16px">*)</i></span></div><div class="fb" style="top:113px"></div><div class="ln" style="top:126px"><span class="s" style="left:327px;color:#1B6B1B">12</span><span class="s" style="left:399px"><span class="v">CamPosEndF</span>:=400.0*SIN(<span class="v">CamRadEndF</span>);</span><span class="m" style="left:807px"><i style="width:40px">(*180</i><b>度</b><i style="width:8px">-</i><b>同</b><b>步</b><b>结</b><b>束</b><b>角</b><b>度</b><b>对</b><b>应</b><b>行</b><b>程</b><i style="width:16px">*)</i></span></div><div class="fb" style="top:130px"></div><div class="ln" style="top:143px"><span class="s" style="left:327px;color:#1B6B1B">13</span><span class="s" style="left:399px">FLT2DINT(<span class="t">TRUE</span>,<span class="v">CamPosEndF</span>,<span class="v">CamPosEnd</span>);</span><span class="m" style="left:807px"><i style="width:16px">(*</i><b>结</b><b>束</b><b>角</b><b>度</b><b>行</b><b>程</b><i style="width:24px">INT</i><b>换</b><b>算</b><i style="width:16px">*)</i></span></div><div class="fb" style="top:147px"></div><div class="ln" style="top:160px"><span class="s" style="left:327px;color:#1B6B1B">14</span></div><div class="ln" style="top:177px"><span class="s" style="left:327px;color:#1B6B1B">15</span><span class="s" style="left:399px">DINT2FLT(<span class="t">TRUE</span>,<span class="v">FlimLong</span>,<span class="v">FlimLongF</span>);</span></div><div class="ln" style="top:194px"><span class="s" style="left:327px;color:#1B6B1B">16</span><span class="s" style="left:399px"><span class="k">IF</span> <span class="v">FlimLongF</span>&gt;0.0 <span class="k">THEN</span></span></div><div class="fb" style="top:198px"></div><div class="ln" style="top:211px"><span class="s" style="left:327px;color:#1B6B1B">17</span><span class="s" style="left:399px">  <span class="v">CAMStarPerF</span>:=(<span class="v">CamPosStartF</span>/<span class="v">FlimLongF</span>)*512.0;</span></div><div class="ln" style="top:228px"><span class="s" style="left:327px;color:#1B6B1B">18</span><span class="s" style="left:399px">  <span class="v">CAMEndPerF</span>:=(<span class="v">CamPosEndF</span>/<span class="v">FlimLongF</span>)*512.0;</span></div><div class="ln" style="top:245px"><span class="s" style="left:327px;color:#1B6B1B">19</span><span class="s" style="left:399px"><span class="k">END_IF</span>;</span></div><div class="a" style="left:350px;top:253px;width:6px;height:1px;background:#808080"></div><div class="ln" style="top:262px"><span class="s" style="left:327px;color:#1B6B1B">20</span><span class="s" style="left:399px">FLT2DINT(<span class="t">TRUE</span>, <span class="v">CAMStarPerF</span> ,<span class="v">CAMStarPer</span>);</span></div><div class="ln" style="top:279px"><span class="s" style="left:327px;color:#1B6B1B">21</span><span class="s" style="left:399px">FLT2DINT(<span class="t">TRUE</span>, <span class="v">CAMEndPerF</span> ,<span class="v">CAMEndPer</span>);</span></div><div class="ln" style="top:296px"><span class="s" style="left:327px;color:#1B6B1B">22</span><span class="s" style="left:399px"><span class="v">CAMPer1</span>:=256-<span class="v">CAMStarPer</span>;</span></div><div class="ln" style="top:313px"><span class="s" style="left:327px;color:#1B6B1B">23</span><span class="s" style="left:399px">DINT2FLT(<span class="t">TRUE</span>,<span class="v">CAMPer1</span>,<span class="v">CAMPer1F</span>);</span></div><div class="ln" style="top:330px"><span class="s" style="left:327px;color:#1B6B1B">24</span><span class="s" style="left:399px"><span class="v">CAMPer2</span>:=256+<span class="v">CAMEndPer</span>;</span></div><div class="ln" style="top:347px"><span class="s" style="left:327px;color:#1B6B1B">25</span><span class="s" style="left:399px">DINT2FLT(<span class="t">TRUE</span>,<span class="v">CAMPer2</span>,<span class="v">CAMPer2F</span>);</span></div><div class="ln" style="top:364px"><span class="s" style="left:327px;color:#1B6B1B">26</span></div><div class="ln" style="top:381px"><span class="s" style="left:327px;color:#1B6B1B">27</span><span class="s" style="left:399px"><span class="v">FlimLong1</span>:=<span class="v">FlimLong</span>*1000;</span><span class="m" style="left:783px"><i style="width:16px">(*</i><b>模</b><b>长</b><b>度</b><b>单</b><b>位</b><i style="width:56px">0.1um*)</i></span></div><div class="fb" style="top:385px"></div><div class="ln" style="top:398px"><span class="s" style="left:327px;color:#1B6B1B">28</span><span class="s" style="left:399px">DMOV( <span class="t">TRUE</span> , <span class="v">FlimLong1</span> , U1¥G36472 );</span><span class="m" style="left:783px"><i style="width:16px">(*</i><b>轴</b><i style="width:8px">1</i><b>凸</b><b>轮</b><b>轴</b><b>一</b><b>周</b><b>期</b><b>长</b><b>度</b><i style="width:16px">*)</i></span></div><div class="fb" style="top:402px"></div><div class="ln" style="top:415px"><span class="s" style="left:327px;color:#1B6B1B">29</span><span class="s" style="left:399px">DMOV( <span class="t">TRUE</span> , K1 , U1¥G36474 );</span><span class="m" style="left:783px"><i style="width:16px">(*</i><b>轴</b><i style="width:8px">1</i><b>凸</b><b>轮</b><b>编</b><b>号</b><i style="width:16px">*)</i></span></div><div class="fb" style="top:419px"></div><div class="ln" style="top:432px"><span class="s" style="left:327px;color:#1B6B1B">30</span><span class="s" style="left:399px">DMOV( <span class="t">TRUE</span> , K36000000 , U1¥G36476 );</span><span class="m" style="left:783px"><i style="width:16px">(*</i><b>轴</b><i style="width:8px">1</i><b>凸</b><b>轮</b><b>行</b><b>程</b><b>量</b><i style="width:16px">*)</i></span></div><div class="fb" style="top:436px"></div><div class="ln" style="top:449px"><span class="s" style="left:327px;color:#1B6B1B">31</span></div><div class="ln" style="top:466px"><span class="s" style="left:327px;color:#1B6B1B">32</span><span class="s" style="left:399px">DMOV( <span class="t">TRUE</span> , <span class="v">FlimLong1</span> , U1¥G36672 );</span><span class="m" style="left:783px"><i style="width:16px">(*</i><b>轴</b><i style="width:8px">2</i><b>凸</b><b>轮</b><b>轴</b><b>一</b><b>周</b><b>期</b><b>长</b><b>度</b><i style="width:16px">*)</i></span></div><div class="fb" style="top:470px"></div><div class="ln" style="top:483px"><span class="s" style="left:327px;color:#1B6B1B">33</span><span class="s" style="left:399px">DMOV( <span class="t">TRUE</span> , K0 , U1¥G36674 );</span><span class="m" style="left:783px"><i style="width:16px">(*</i><b>轴</b><i style="width:8px">2</i><b>凸</b><b>轮</b><b>编</b><b>号</b><i style="width:16px">*)</i></span></div><div class="fb" style="top:487px"></div><div class="ln" style="top:500px"><span class="s" style="left:327px;color:#1B6B1B">34</span><span class="s" style="left:399px">DMOV( <span class="t">TRUE</span> , <span class="v">FlimLong1</span> , U1¥G36676 );</span><span class="m" style="left:783px"><i style="width:16px">(*</i><b>轴</b><i style="width:8px">2</i><b>凸</b><b>轮</b><b>行</b><b>程</b><b>量</b><i style="width:16px">*)</i></span></div><div class="fb" style="top:504px"></div></div>
<div class="a" style="left:296.500px;top:520px;width:790px;height:16px;background:#F0F0F0"></div>
<div class="a" style="left:314px;top:520px;width:686px;height:16px;background:#CDCDCD"></div>
<svg style="left:302px;top:523.5px" width="6" height="9" viewBox="0 0 6 9"><path d="M5.200 .8l-3.700 3.700 3.700 3.700" fill="none" stroke="#505050" stroke-width="1.800"/></svg>
<svg style="left:1078.5px;top:523.5px" width="6" height="9" viewBox="0 0 6 9"><path d="M.8 .8l3.700 3.700-3.700 3.700" fill="none" stroke="#505050" stroke-width="1.800"/></svg>
</body></html>
